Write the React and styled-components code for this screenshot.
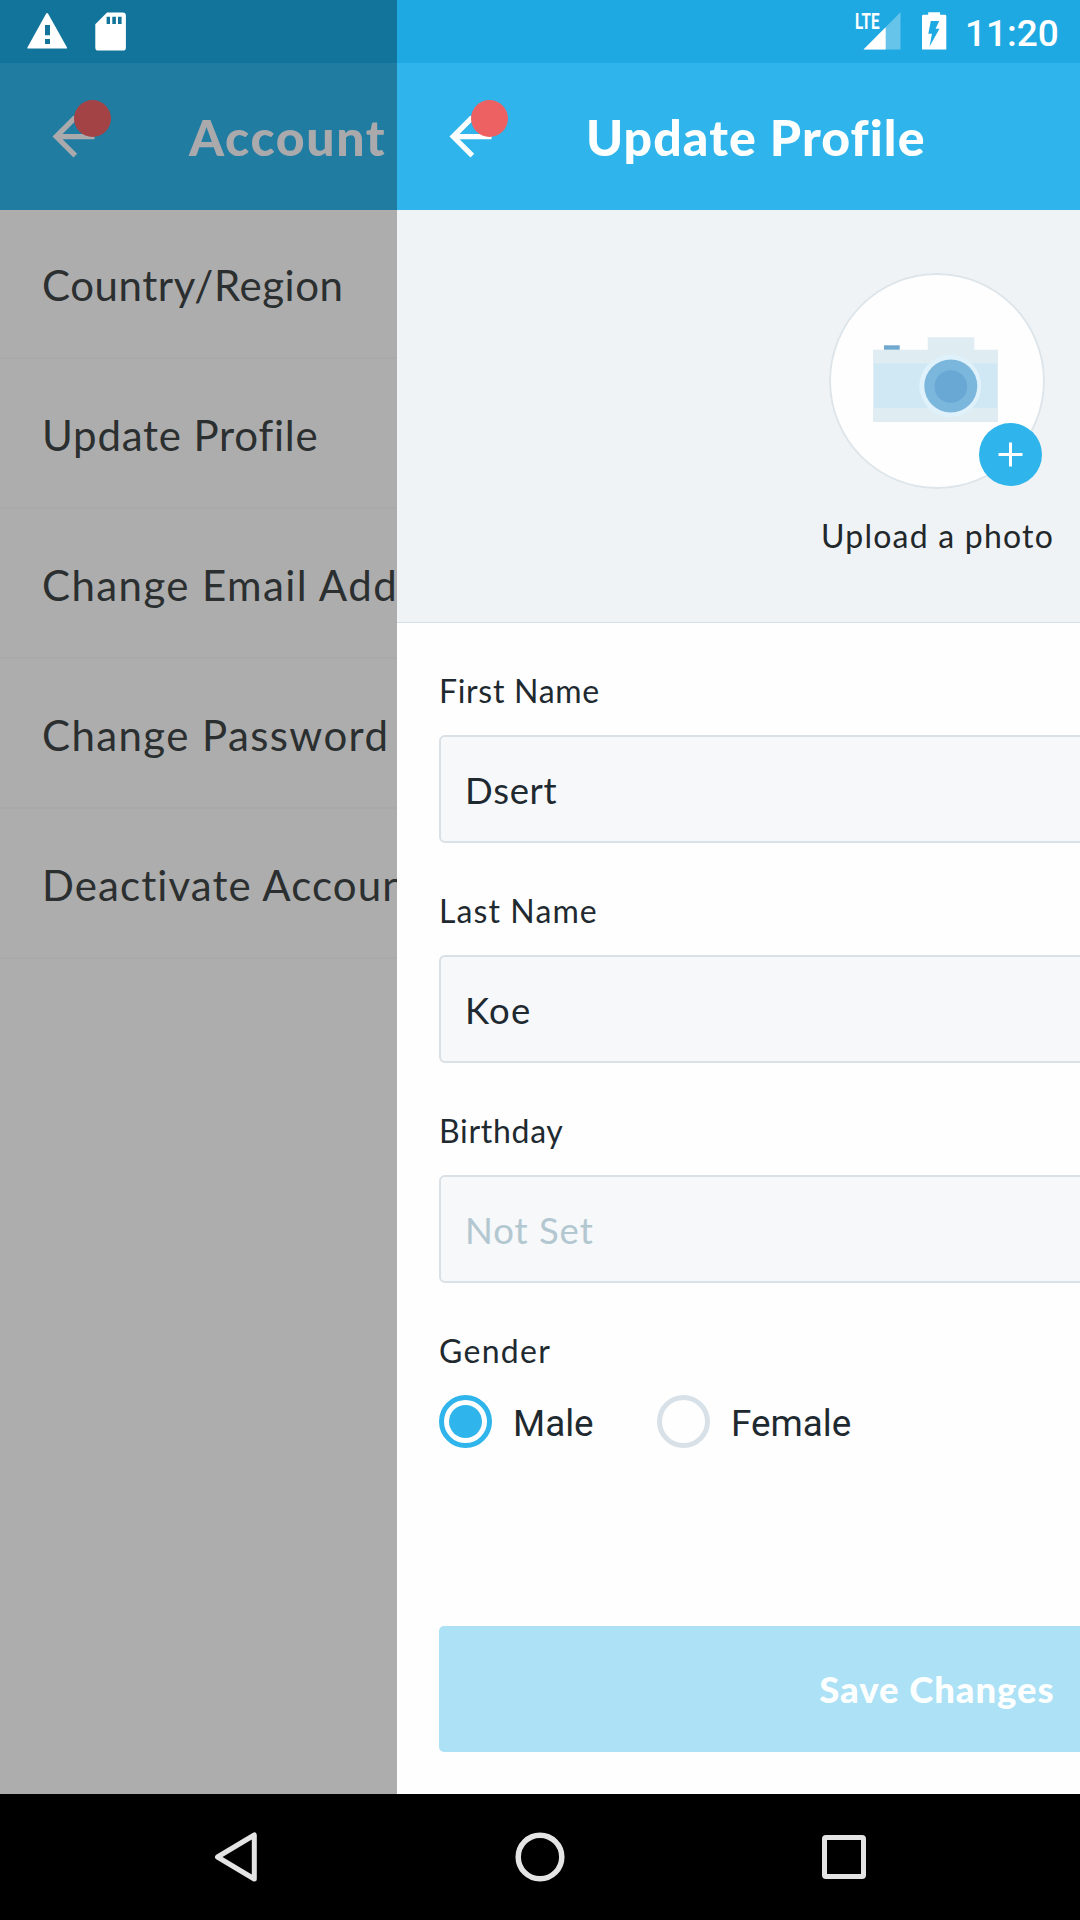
import React from "react";
import styled, { createGlobalStyle } from "styled-components";

const GlobalStyle = createGlobalStyle`
  *, *::before, *::after { box-sizing: border-box; }
  body { margin: 0; background: #000; font-family: Lato, "Liberation Sans", sans-serif; }
`;

const Screen = styled.div`
  position: relative;
  display: flex;
  flex-direction: column;
  width: 1080px;
  height: 1920px;
  overflow: hidden;
`;

const Stage = styled.div`
  display: flex;
  flex: 0 0 1794px;
  overflow: hidden;
`;

const BackPage = styled.section`
  display: flex;
  flex-direction: column;
  flex: 0 0 397px;
  overflow: hidden;
  background: #adadad;
`;

const FrontPage = styled.section`
  display: flex;
  flex-direction: column;
  flex: 0 0 1080px;
  background: #fefefe;
`;

const StatusStrip = styled.div`
  flex: 0 0 63px;
  background: ${(p) => (p.$dim ? "#12749a" : "#1ea9e2")};
`;

const Header = styled.header`
  display: flex;
  align-items: center;
  flex: 0 0 147px;
  padding-left: 42px;
  gap: 84px;
  background: ${(p) => (p.$dim ? "#217ca2" : "#2fb5eb")};
  color: ${(p) => (p.$dim ? "#aaaaac" : "#fdffff")};
`;

const BackButton = styled.div`
  position: relative;
  flex: 0 0 63px;
  height: 63px;
  svg { display: block; }
`;

const Badge = styled.span`
  position: absolute;
  left: 32px;
  top: -5px;
  width: 37px;
  height: 37px;
  border-radius: 50%;
  background: ${(p) => (p.$dim ? "#a44346" : "#ed6163")};
`;

const Title = styled.h1`
  margin: 0;
  font-size: 50px;
  line-height: 60px;
  font-weight: 900;
  white-space: nowrap;
  letter-spacing: ${(p) => p.$track}px;
`;

const Menu = styled.ul`
  margin: -1px 0 0;
  padding: 0;
  list-style: none;
`;

const MenuRow = styled.li`
  display: flex;
  align-items: center;
  height: 150px;
  padding: 3px 0 0 42px;
  border-bottom: 2px solid #a9a9aa;
  color: #2b2f30;
  font-size: 42px;
  white-space: nowrap;
  letter-spacing: ${(p) => p.$track}px;
`;

const PhotoSection = styled.div`
  display: flex;
  flex-direction: column;
  align-items: center;
  flex: 0 0 413px;
  padding-top: 63px;
  background: #eff3f6;
  border-bottom: 1px solid #d3e0e9;
`;

const Avatar = styled.div`
  position: relative;
  width: 216px;
  height: 216px;
  border-radius: 50%;
  background: #fefefe;
  box-shadow: inset 0 0 0 2px #dde5ea;
  svg { display: block; }
`;

const AddButton = styled.span`
  position: absolute;
  left: 150px;
  top: 150px;
  display: flex;
  align-items: center;
  justify-content: center;
  width: 63px;
  height: 63px;
  border-radius: 50%;
  background: #2fb5eb;
`;

const PhotoLabel = styled.div`
  margin-top: 27px;
  padding-left: 1px;
  color: #22272a;
  font-size: 32px;
  line-height: 40px;
  letter-spacing: 1.22px;
`;

const Form = styled.div`
  display: flex;
  flex-direction: column;
  flex: 1;
  padding: 48px 42px 42px;
  color: #1f2a30;
`;

const Field = styled.div`
  margin-bottom: 48px;
`;

const Label = styled.div`
  margin-bottom: 24px;
  font-size: 32px;
  line-height: 40px;
  letter-spacing: ${(p) => p.$track}px;
`;

const Input = styled.div`
  display: flex;
  align-items: center;
  height: 108px;
  padding: 2px 24px 0;
  border: 2px solid #d9e1e6;
  border-radius: 6px;
  background: #f6f8fa;
  color: ${(p) => (p.$empty ? "#b2c7d0" : "#1f2a30")};
  font-size: 36.5px;
  letter-spacing: ${(p) => p.$track}px;
`;

const Options = styled.div`
  display: flex;
`;

const Option = styled.div`
  display: flex;
  align-items: center;
  gap: 21px;
  min-width: 218px;
  height: 53px;
  font-family: Roboto, "Liberation Sans", sans-serif;
  font-size: 36.8px;
  span { padding-top: 3px; }
`;

const Radio = styled.i`
  display: flex;
  align-items: center;
  justify-content: center;
  width: 53px;
  height: 53px;
  border-radius: 50%;
  border: 5px solid ${(p) => (p.$on ? "#2fb5eb" : "#d8e1e7")};
  &::after {
    content: "";
    width: 33px;
    height: 33px;
    border-radius: 50%;
    background: ${(p) => (p.$on ? "#2fb5eb" : "transparent")};
  }
`;

const SaveButton = styled.div`
  display: flex;
  align-items: center;
  justify-content: center;
  height: 126px;
  margin-top: auto;
  border-radius: 5px;
  background: #ace1f6;
  color: #fdffff;
  font-size: 36.5px;
  font-weight: 900;
  letter-spacing: 0.95px;
`;

const StatusIcons = styled.div`
  position: absolute;
  inset: 0 0 auto 0;
  display: flex;
  align-items: center;
  height: 62px;
  padding: 0 19px 0 27px;
  color: #fff;
  svg { display: block; flex: none; }
`;

const Notifications = styled.div`
  display: flex;
  gap: 27px;
  margin-right: auto;
`;

const System = styled.div`
  display: flex;
  align-items: center;
`;

const SignalSlot = styled.div`
  margin-right: 21px;
`;

const Clock = styled.div`
  margin-left: 18px;
  padding-top: 5px;
  width: 96px;
  font-family: Roboto, "Liberation Sans", sans-serif;
  font-size: 37px;
  font-weight: 500;
  line-height: 44px;
  white-space: nowrap;
`;

const NavBar = styled.nav`
  display: flex;
  align-items: center;
  justify-content: center;
  gap: 254px;
  flex: 1;
  background: #000;
`;

const ArrowIcon = () => (
  <svg width="63" height="63" viewBox="0 0 24 24" fill="currentColor">
    <path d="M20 11H7.83l5.59-5.59L12 4l-8 8 8 8 1.41-1.41L7.83 13H20v-2z" />
  </svg>
);

const WarningIcon = () => (
  <svg width="41" height="40" viewBox="27 11 41 40">
    <path
      fill="#fff"
      fillRule="evenodd"
      d="M46.2 13.4q.9-1 1.800 0L67 47.400q.3 1.200-.8 1.200H28.200q-1.200 0-.8-1.200ZM45 25v10.300h5V25ZM45 39v5h5v-5Z"
    />
  </svg>
);

const SdIcon = () => (
  <svg width="31" height="40" viewBox="95 11 31 40">
    <path
      fill="#fff"
      fillRule="evenodd"
      d="M107 12.600H122.700a3.200 3.200 0 0 1 3.200 3.200V47.400a3.200 3.200 0 0 1-3.200 3.200H98.500a3.200 3.200 0 0 1-3.200-3.200V24.300ZM106.600 16.700V24H110v-7.300ZM112.300 16.700V24h3.600v-7.300ZM118 16.700V24h3.600v-7.300Z"
    />
  </svg>
);

const SignalIcon = () => (
  <svg width="46" height="40" viewBox="855 11 46 40" fill="#fff" overflow="visible">
    <path d="M863.500 49.500 900.500 12.300V49.500Z" opacity=".32" />
    <path d="M863.500 49.500 885.700 27.200V49.500Z" />
    <text
      x="855"
      y="29"
      fontFamily="Roboto, sans-serif"
      fontWeight="700"
      fontSize="21.500"
      textLength="24.500"
      lengthAdjust="spacingAndGlyphs"
    >
      LTE
    </text>
  </svg>
);

const BatteryIcon = () => (
  <svg width="25" height="40" viewBox="922 11 25 40">
    <path
      fill="#fff"
      fillRule="evenodd"
      d="M928.200 12.200h11.900v2.500h4.800q1.400 0 1.400 1.400V49.500H922V16.100q0-1.400 1.400-1.400h4.800ZM930.800 21h8.400L935.600 28.700h3.900L929.500 46.500l2.500-12.800h-3.700Z"
    />
  </svg>
);

const CameraIcon = () => (
  <svg width="216" height="216" viewBox="0 0 216 216">
    <rect x="55" y="72.300" width="15.700" height="4.600" fill="#6fa9cf" />
    <path d="M44 76.700h54.700V64.300h46.600v12.400H169V149H44Z" fill="#dfedf3" />
    <rect x="45" y="90.300" width="123" height="44.700" fill="#d0e8f4" />
    <circle cx="121.300" cy="113" r="31" fill="#dff1fb" />
    <circle cx="121.800" cy="113" r="26.500" fill="#7bb6dc" />
    <circle cx="121.800" cy="113.500" r="16.300" fill="#69a7d4" />
  </svg>
);

const PlusIcon = () => (
  <svg width="25" height="25" viewBox="0 0 25 25" stroke="#fff" strokeWidth="3">
    <path d="M12.500 0.500v24M0.500 12.500h24" />
  </svg>
);

const menu = [
  { text: "Country/Region", track: 0.56 },
  { text: "Update Profile", track: 0.8 },
  { text: "Change Email Address", track: 1.4 },
  { text: "Change Password", track: 1.39 },
  { text: "Deactivate Account", track: 1.1 },
];

const fields = [
  { label: "First Name", labelTrack: 0.7, value: "Dsert", track: 0.7 },
  { label: "Last Name", labelTrack: 1.1, value: "Koe", track: 1.3 },
  { label: "Birthday", labelTrack: 0.7, value: "Not Set", track: 0.95, empty: true },
];

export default function App() {
  return (
    <Screen>
      <GlobalStyle />
      <Stage>
        <BackPage>
          <StatusStrip $dim />
          <Header $dim>
            <BackButton>
              <ArrowIcon />
              <Badge $dim />
            </BackButton>
            <Title $track={1.6}>Account</Title>
          </Header>
          <Menu>
            {menu.map((m) => (
              <MenuRow key={m.text} $track={m.track}>
                {m.text}
              </MenuRow>
            ))}
          </Menu>
        </BackPage>
        <FrontPage>
          <StatusStrip />
          <Header>
            <BackButton>
              <ArrowIcon />
              <Badge />
            </BackButton>
            <Title $track={1.1}>Update Profile</Title>
          </Header>
          <PhotoSection>
            <Avatar>
              <CameraIcon />
              <AddButton>
                <PlusIcon />
              </AddButton>
            </Avatar>
            <PhotoLabel>Upload a photo</PhotoLabel>
          </PhotoSection>
          <Form>
            {fields.map((f) => (
              <Field key={f.label}>
                <Label $track={f.labelTrack}>{f.label}</Label>
                <Input $empty={f.empty} $track={f.track}>
                  {f.value}
                </Input>
              </Field>
            ))}
            <Label $track={1.3}>Gender</Label>
            <Options>
              <Option>
                <Radio $on />
                <span>Male</span>
              </Option>
              <Option>
                <Radio />
                <span>Female</span>
              </Option>
            </Options>
            <SaveButton>Save Changes</SaveButton>
          </Form>
        </FrontPage>
      </Stage>
      <NavBar>
        <svg width="50" height="50" viewBox="211 1832 50 50" fill="none" stroke="#e4e4e4" strokeWidth="5" strokeLinejoin="round">
          <path d="M217.500 1857 254.300 1835V1879Z" />
        </svg>
        <svg width="50" height="50" viewBox="0 0 50 50" fill="none" stroke="#e4e4e4" strokeWidth="5.500">
          <circle cx="25" cy="25" r="21.800" />
        </svg>
        <svg width="50" height="50" viewBox="0 0 50 50" fill="none" stroke="#e4e4e4" strokeWidth="5">
          <rect x="5.500" y="5.500" width="39" height="39" rx="1.500" />
        </svg>
      </NavBar>
      <StatusIcons>
        <Notifications>
          <WarningIcon />
          <SdIcon />
        </Notifications>
        <System>
          <SignalSlot>
            <SignalIcon />
          </SignalSlot>
          <BatteryIcon />
          <Clock>11:20</Clock>
        </System>
      </StatusIcons>
    </Screen>
  );
}
